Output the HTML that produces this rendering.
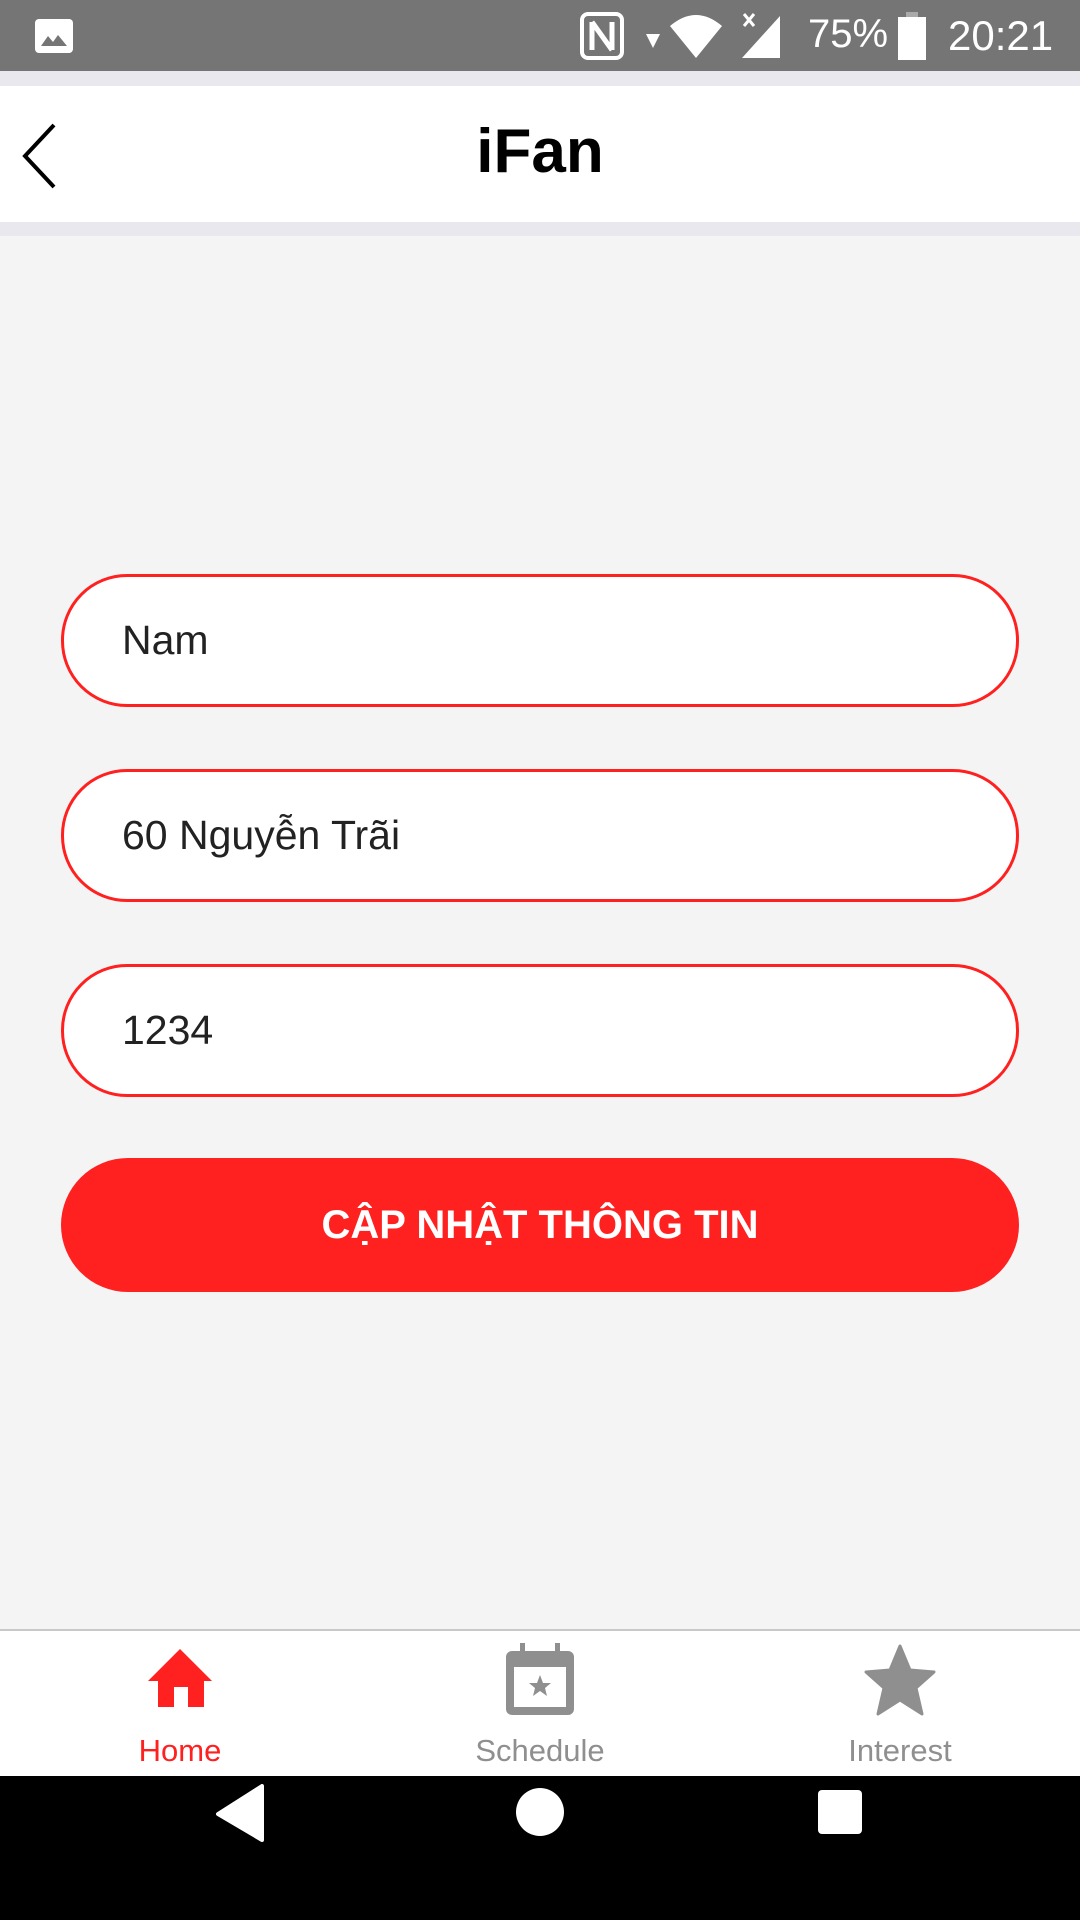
<!DOCTYPE html>
<html><head><meta charset="utf-8"><style>
*{margin:0;padding:0;box-sizing:border-box}
body{width:1080px;height:1920px;background:#f4f4f4;font-family:"Liberation Sans",Roboto,sans-serif;position:relative;overflow:hidden}
.abs{position:absolute}
.sb{left:0;top:0;width:1080px;height:71px;background:#757575;color:#fff}
.hdr{left:0;top:86px;width:1080px;height:136px;background:#fff}
.inp{left:61px;width:958px;height:133px;border:3px solid #ff2020;border-radius:66px;background:#fff;font-size:41px;color:#222;padding-left:58px;line-height:127px}
.btn{left:61px;top:1158px;width:958px;height:134px;border-radius:67px;background:#ff2020;color:#fff;font-weight:bold;font-size:40px;text-align:center;line-height:134px}
.nav{left:0;top:1629px;width:1080px;height:147px;background:#fff;border-top:2px solid #c8c8c8}
.lbl{font-size:31px;width:300px;text-align:center;top:1733px}
</style></head><body>
<div class="abs sb">
 <svg class="abs" style="left:34px;top:18px" width="40" height="36"><rect x="1" y="1" width="38" height="34" rx="4" fill="#fff"/><path d="M7 28 L14 18 L19 24 L24 17 L33 28Z" fill="#757575"/></svg>
 <svg class="abs" style="left:580px;top:12px" width="48" height="48"><rect x="2" y="2" width="40" height="44" rx="6" fill="none" stroke="#fff" stroke-width="4"/><path d="M12 10V38M32 10V38M12 10L32 38" stroke="#fff" stroke-width="5" fill="none"/></svg>
 <svg class="abs" style="left:646px;top:34px" width="16" height="16"><path d="M0 0H14L7 14Z" fill="#fff"/></svg>
 <svg class="abs" style="left:670px;top:12px" width="52" height="46"><path d="M0 14 Q26 -8 52 14 L26 46Z" fill="#fff"/></svg>
 <svg class="abs" style="left:740px;top:12px" width="42" height="46"><path d="M40 4V46H2Z" fill="#fff"/><path d="M4 2L14 14M14 2L4 14" stroke="#fff" stroke-width="3"/></svg>
 <div class="abs" style="left:808px;top:12px;font-size:40px">75%</div>
 <svg class="abs" style="left:898px;top:12px" width="28" height="48"><rect x="8" y="0" width="12" height="6" fill="#aaa"/><rect x="0" y="5" width="28" height="43" fill="#fff"/></svg>
 <div class="abs" style="left:948px;top:12px;font-size:42px">20:21</div>
</div>
<div class="abs" style="left:0;top:71px;width:1080px;height:15px;background:#e8e8ee"></div>
<div class="abs hdr">
 <svg class="abs" style="left:18px;top:36px" width="44" height="68"><path d="M36 3L7 34L36 65" fill="none" stroke="#000" stroke-width="4"/></svg>
 <div class="abs" style="left:0;width:1080px;text-align:center;top:30px;font-size:62px;font-weight:bold;color:#000">iFan</div>
</div>
<div class="abs" style="left:0;top:222px;width:1080px;height:14px;background:#e8e8ee"></div>
<div class="abs inp" style="top:574px">Nam</div>
<div class="abs inp" style="top:769px">60 Nguyễn Trãi</div>
<div class="abs inp" style="top:964px">1234</div>
<div class="abs btn">CẬP NHẬT THÔNG TIN</div>
<div class="abs nav"></div>
<svg class="abs" style="left:146px;top:1647px" width="68" height="62"><path d="M34 2L66 34H58V60H42V40H28V60H12V34H2Z" fill="#ff2020"/></svg>
<svg class="abs" style="left:504px;top:1643px" width="72" height="74"><rect x="2" y="8" width="68" height="64" rx="6" fill="#8f8f8f"/><rect x="10" y="24" width="52" height="40" fill="#fff"/><rect x="16" y="0" width="5" height="12" fill="#8f8f8f"/><rect x="51" y="0" width="5" height="12" fill="#8f8f8f"/><path d="M36 32L39 40H47L41 45L43 53L36 48L29 53L31 45L25 40H33Z" fill="#8f8f8f"/></svg>
<svg class="abs" style="left:864px;top:1644px" width="72" height="72"><path d="M36 2L46 26L70 28L52 44L58 70L36 56L14 70L20 44L2 28L26 26Z" fill="#8f8f8f" stroke="#8f8f8f" stroke-width="3" stroke-linejoin="round"/></svg>
<div class="abs lbl" style="left:30px;color:#ff2020">Home</div>
<div class="abs lbl" style="left:390px;color:#8f8f8f">Schedule</div>
<div class="abs lbl" style="left:750px;color:#8f8f8f">Interest</div>
<div class="abs" style="left:0;top:1776px;width:1080px;height:144px;background:#000"></div>
<svg class="abs" style="left:214px;top:1784px" width="52" height="58"><path d="M48 2V56L4 30Z" fill="#fff" stroke="#fff" stroke-width="4" stroke-linejoin="round"/></svg>
<div class="abs" style="left:516px;top:1788px;width:48px;height:48px;border-radius:50%;background:#fff"></div>
<div class="abs" style="left:818px;top:1790px;width:44px;height:44px;border-radius:4px;background:#fff"></div>
</body></html>
